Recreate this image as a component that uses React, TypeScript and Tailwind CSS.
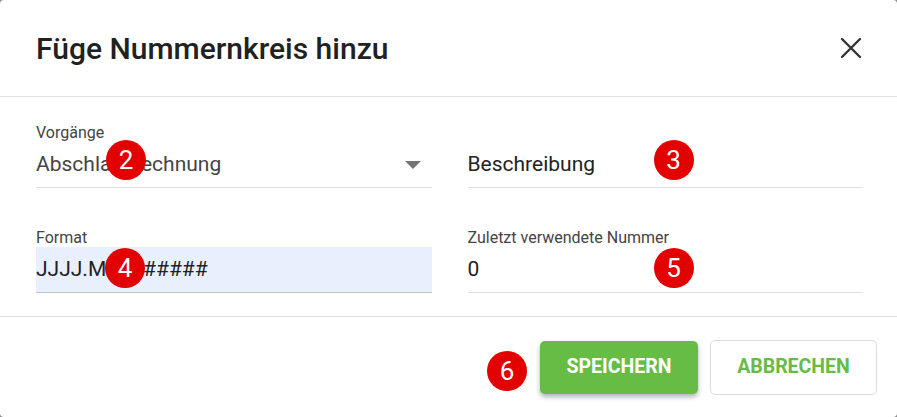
import React from 'react';

function Badge({ n, className }: { n: number; className: string }) {
  return (
    <div
      className={`absolute flex h-[40px] w-[40px] items-center justify-center rounded-full bg-[#e20000] text-[26px] leading-none text-white ${className}`}
    >
      {n}
    </div>
  );
}

function Field({
  label,
  value,
  children,
  filled,
}: {
  label?: string;
  value: string;
  children?: React.ReactNode;
  filled?: boolean;
}) {
  return (
    <div className="relative flex flex-col">
      <div className="h-[18px] text-[16px] leading-[18px] text-[#444]">{label}</div>
      <div
        className={`flex h-[46px] items-center border-b ${filled ? 'bg-[#e8f0fe] border-[#c4c4c4]' : 'border-[#e0e0e0]'}`}
      >
        <span className="text-[21px] text-[#222]">{value}</span>
      </div>
      {children}
    </div>
  );
}

export default function App() {
  return (
    <div className="h-screen w-full bg-[#8a8a8a]">
      <div className="flex h-full flex-col rounded-[4px] bg-white font-['Roboto',sans-serif]">
        {/* Header */}
        <div className="flex h-[97px] shrink-0 items-center justify-between border-b border-[#e0e0e0] pl-[36px] pr-[35px]">
          <h1 className="text-[30px] font-medium text-[#212121]">Füge Nummernkreis hinzu</h1>
          <svg width="22" height="22" viewBox="0 0 22 22" className="text-[#333]">
            <path d="M2 2 L20 20 M20 2 L2 20" stroke="currentColor" strokeWidth="2.4" strokeLinecap="round" />
          </svg>
        </div>

        {/* Body */}
        <div className="grid h-[219px] shrink-0 grid-cols-2 content-start gap-x-[36px] gap-y-[41px] pl-[36px] pr-[34px] pt-[27px]">
          <div className="relative flex flex-col">
            <div className="h-[18px] text-[16px] leading-[18px] text-[#444]">Vorgänge</div>
            <div className="flex h-[46px] items-center justify-between border-b border-[#e0e0e0] pr-[11px]">
              <span className="text-[21px] text-[#444]">Abschlagsrechnung</span>
              <svg width="16" height="8" viewBox="0 0 16 8">
                <polygon points="0,0 16,0 8,8" fill="#757575" />
              </svg>
            </div>
            <Badge n={2} className="left-[70px] top-[16px]" />
          </div>

          <Field value="Beschreibung">
            <Badge n={3} className="left-[186px] top-[16px]" />
          </Field>

          <Field label="Format" value="JJJJ.MM.######" filled>
            <Badge n={4} className="left-[69px] top-[19px]" />
          </Field>

          <Field label="Zuletzt verwendete Nummer" value="0">
            <Badge n={5} className="left-[186px] top-[19px]" />
          </Field>
        </div>

        {/* Footer */}
        <div className="flex flex-1 items-center justify-end gap-[12px] border-t border-[#e0e0e0] pr-[20px]">
          <div className="relative mr-[1px] h-[40px] w-[40px] translate-y-[4px]">
            <Badge n={6} className="left-0 top-0" />
          </div>
          <button className="h-[53px] w-[158px] rounded-[5px] bg-[#67bc45] text-[19.5px] font-bold text-white shadow-[0_3px_5px_rgba(0,0,0,0.3)]">
            SPEICHERN
          </button>
          <button className="h-[55px] w-[167px] rounded-[5px] border border-[#dcdcdc] bg-white text-[19.5px] font-bold text-[#67bc45]">
            ABBRECHEN
          </button>
        </div>
      </div>
    </div>
  );
}
